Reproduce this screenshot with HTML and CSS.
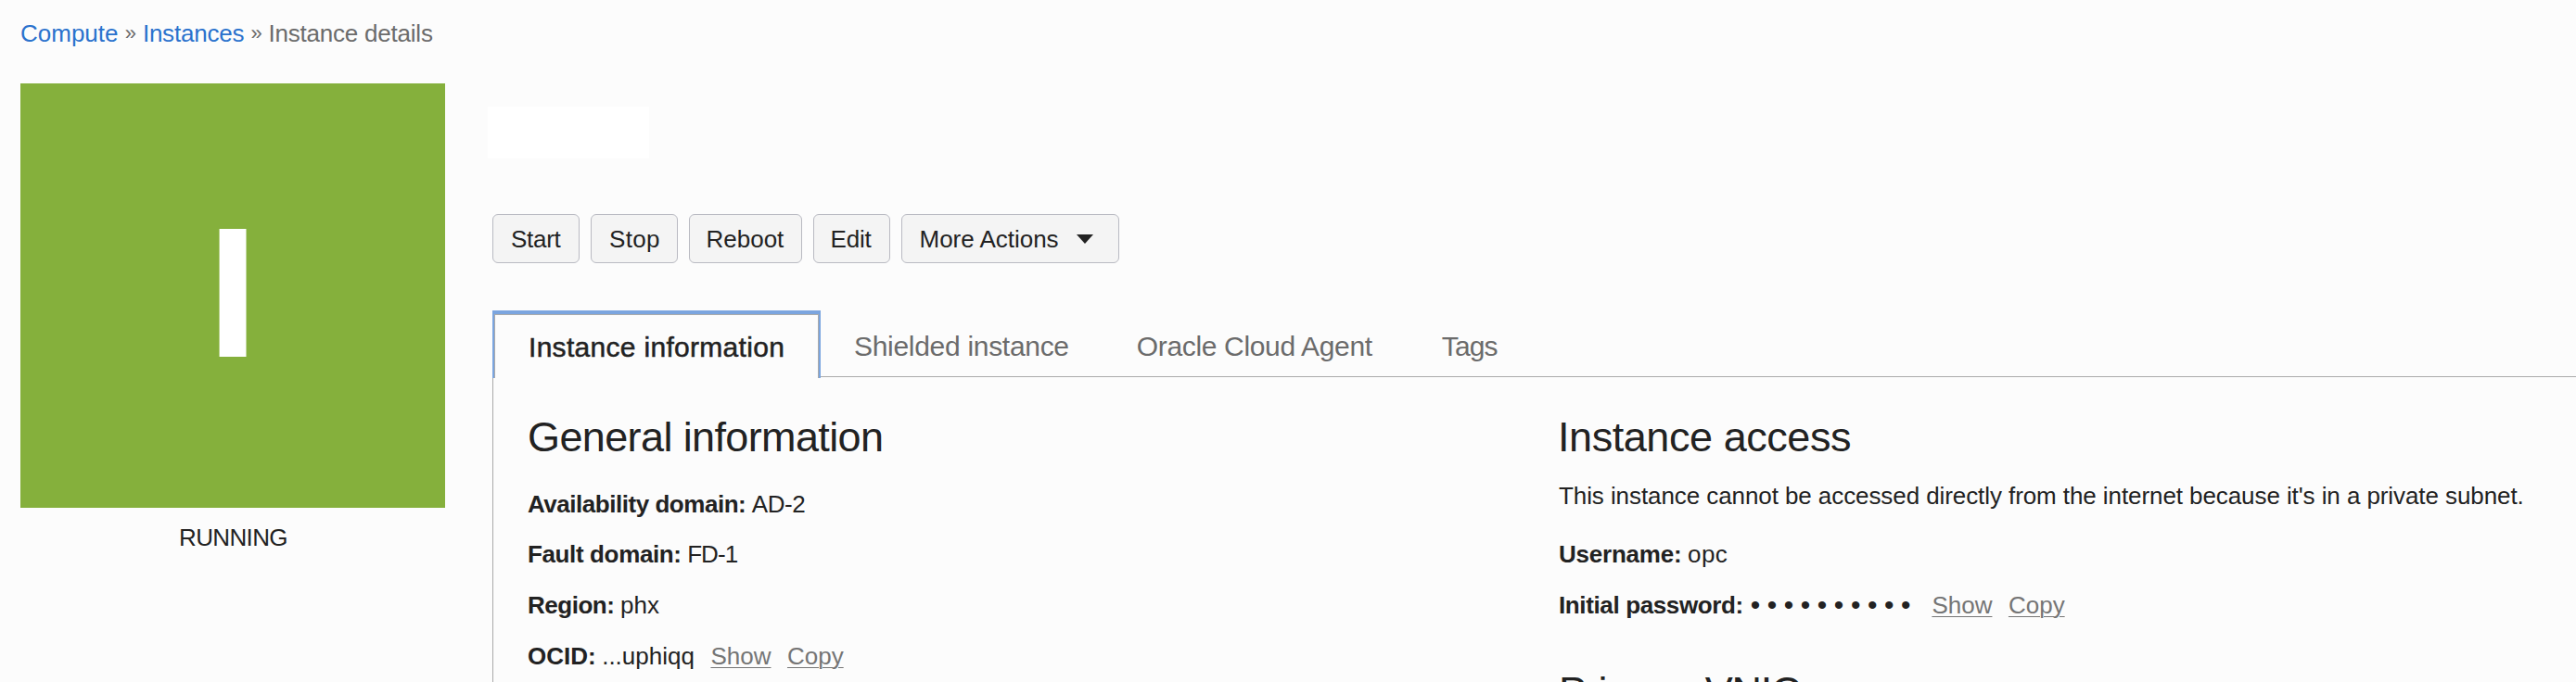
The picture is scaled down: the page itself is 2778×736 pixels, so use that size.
FILE: index.html
```
<!DOCTYPE html>
<html lang="en">
<head>
<meta charset="utf-8">
<title>Instance details</title>
<link rel="stylesheet" href="styles.css">
</head>
<body>
<nav class="breadcrumb">
  <a class="crumb-link" href="#">Compute</a><span class="crumb-sep">»</span><a class="crumb-link crumb-snug" href="#">Instances</a><span class="crumb-sep">»</span><span class="crumb-snug">Instance details</span>
</nav>
<div class="page">
  <aside class="status">
    <div class="status-tile">I</div>
    <div class="status-label">RUNNING</div>
  </aside>
  <main class="main">
    <div class="instance-name"></div>
    <div class="actions">
      <button class="btn btn-start">Start</button>
      <button class="btn btn-stop">Stop</button>
      <button class="btn btn-reboot">Reboot</button>
      <button class="btn btn-edit">Edit</button>
      <button class="btn btn-more">More Actions<svg class="caret" viewBox="0 0 18 10"><path d="M0 0H18L9 10Z"/></svg></button>
    </div>
    <div class="tabs">
      <div class="tab tab-active">Instance information</div>
      <div class="tab">Shielded instance</div>
      <div class="tab tab-agent">Oracle Cloud Agent</div>
      <div class="tab tab-tags">Tags</div>
    </div>
    <section class="panel">
      <div class="column">
        <h2 class="heading heading-general">General information</h2>
        <div class="row row-first"><b class="label label-tight">Availability domain:</b><span class="value-tight">AD-2</span></div>
        <div class="row row-close"><b class="label">Fault domain:</b><span class="value-tighter">FD-1</span></div>
        <div class="row"><b class="label label-tight">Region:</b><span>phx</span></div>
        <div class="row"><b class="label label-plain">OCID:</b><span>...uphiqq</span><a class="link" href="#">Show</a><a class="link" href="#">Copy</a></div>
      </div>
      <div class="column">
        <h2 class="heading heading-access">Instance access</h2>
        <p class="note">This instance cannot be accessed directly from the internet because it's in a private subnet.</p>
        <div class="row row-user"><b class="label label-user">Username:</b><span class="value-wide">opc</span></div>
        <div class="row"><b class="label">Initial password:</b><span class="dots">••••••••••</span><a class="link link-first" href="#">Show</a><a class="link" href="#">Copy</a></div>
        <h2 class="heading heading-vnic">Primary VNIC</h2>
      </div>
    </section>
  </main>
</div>
</body>
</html>
```
FILE: styles.css
```
* { box-sizing: border-box; }

body {
  margin: 0;
  height: 736px;
  overflow: hidden;
  background: #fcfcfc;
  color: #222;
  font: 26px/30px "Liberation Sans", Arial, sans-serif;
}

.breadcrumb {
  display: flex;
  gap: 7.2px;
  padding: 21px 0 39px 22px;
  color: #6b6b6b;
}
.crumb-link { color: #2a72cd; text-decoration: none; }
.crumb-snug { letter-spacing: -0.22px; }
.crumb-sep { font-size: 22px; width: 12px; }

.page { display: flex; padding-left: 22px; }

.status { flex: none; width: 509px; }
.status-tile {
  width: 458.3px;
  height: 458px;
  background: #85b03c;
  color: #fff;
  font-size: 200px;
  font-weight: bold;
  line-height: 452px;
  text-align: center;
}
.status-label {
  width: 459px;
  margin-top: 17px;
  text-align: center;
  letter-spacing: -0.63px;
}

.main { flex: 1; min-width: 0; }

.instance-name {
  width: 174px;
  height: 56px;
  margin: 25px 0 60px -5px;
  background: #fff;
}

.actions { display: flex; gap: 12px; }
.btn {
  display: flex;
  align-items: center;
  height: 53px;
  padding: 0 0 0 19px;
  border: 1px solid #b9bac2;
  border-radius: 6px;
  background: #f4f4f4;
  color: #222;
  font: inherit;
  line-height: 50px;
}
.btn-start { width: 94px; letter-spacing: -0.3px; }
.btn-stop { width: 94px; letter-spacing: 0.3px; }
.btn-reboot { width: 121.5px; padding-left: 17.5px; }
.btn-edit { width: 83px; padding-left: 18px; letter-spacing: -0.2px; }
.btn-more { width: 235px; letter-spacing: -0.02px; }
.caret { width: 18px; height: 10px; margin-left: 19px; fill: #222; }

.tabs {
  display: flex;
  height: 72px;
  margin-top: 51px;
  border-bottom: 1px solid #aaa;
  font-size: 30px;
  line-height: 33px;
  color: #6b6b6b;
}
.tab { padding: 22px 36px 0; letter-spacing: -0.3px; }
.tab-agent { padding-left: 37px; letter-spacing: -0.34px; }
.tab-tags { margin-left: 3px; letter-spacing: -0.9px; }
.tab-active {
  position: relative;
  width: 354px;
  height: 73px;
  padding: 19px 0 0 37px;
  border: 2px solid #7ba5df;
  border-top-width: 4px;
  border-bottom: 0;
  background: #fcfcfc;
  box-shadow: inset 1px 0 #aaa, inset -1px 0 #aaa, inset 0 1px #aaa;
  color: #222;
  letter-spacing: 0.3px;
  -webkit-text-stroke: 0.5px #222;
  white-space: nowrap;
}

.panel {
  display: grid;
  grid-template-columns: 1112px 1fr;
  height: 329px;
  padding: 39px 0 0 37px;
  border-left: 1px solid #aaa;
}

.heading {
  margin: 0;
  font-size: 45px;
  font-weight: normal;
  line-height: 51px;
}
.heading-general { letter-spacing: -0.62px; }
.heading-access { margin-left: -1px; letter-spacing: -0.44px; }
.heading-vnic { margin-top: 53px; letter-spacing: -1.23px; }

.note { margin: 23px 0 0; letter-spacing: -0.083px; white-space: nowrap; }

.row { display: flex; height: 30px; margin-top: 25px; }
.row-first { margin-top: 32px; }
.row-close { margin-top: 24px; }
.row-user { margin-top: 33px; }

.label { margin-right: 6.5px; letter-spacing: -0.37px; }
.label-tight { letter-spacing: -0.47px; }
.label-user { letter-spacing: -0.22px; }
.label-plain { letter-spacing: 0; }
.value-tight { letter-spacing: -0.4px; }
.value-tighter { letter-spacing: -0.9px; }
.value-wide { letter-spacing: 0.5px; }

.dots { margin-left: 1.5px; font-size: 30px; letter-spacing: 7.5px; }

.link {
  margin-left: 17.5px;
  color: #757575;
  text-decoration: underline;
  text-decoration-thickness: 1px;
  text-underline-offset: 3px;
}
.link-first { margin-left: 15.5px; }
```
